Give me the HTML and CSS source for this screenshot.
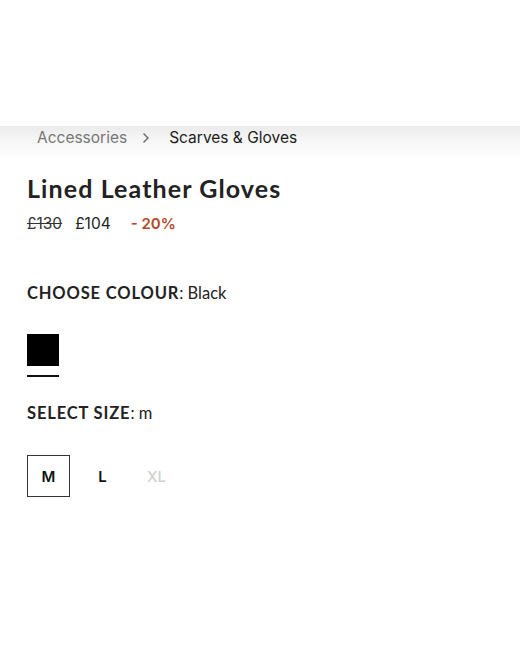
FILE: index.html
```html
<!DOCTYPE html>
<html lang="en">
<head>
<meta charset="utf-8">
<title>Lined Leather Gloves</title>
<link rel="stylesheet" href="styles.css">
</head>
<body>
<header class="topbar"></header>
<main class="product">
  <nav class="crumbs">
    <span class="crumb-link">Accessories</span>
    <svg class="chev" width="8" height="12" viewBox="0 0 8 12"><path d="M1.5 1.5 L6 6 L1.5 10.5" fill="none" stroke="#666" stroke-width="1.4"/></svg>
    <span class="crumb-current">Scarves &amp; Gloves</span>
  </nav>
  <div class="info">
    <h1 class="title">Lined Leather Gloves</h1>
    <div class="prices">
      <span class="old">£130</span>
      <span class="now">£104</span>
      <span class="off">- 20%</span>
    </div>
    <div class="label"><b>CHOOSE COLOUR</b>: Black</div>
    <div class="swatches">
      <div class="swatch selected"><span class="chip"></span></div>
    </div>
    <div class="label size-label"><b>SELECT SIZE</b>: m</div>
    <div class="sizes">
      <span class="size active">M</span>
      <span class="size">L</span>
      <span class="size disabled">XL</span>
    </div>
  </div>
</main>
</body>
</html>
```
FILE: styles.css
```css
* { box-sizing: border-box; }
body {
  margin: 0;
  background: #fff;
  font-family: "Lato", "Liberation Sans", sans-serif;
  color: #222;
}
.topbar { height: 126px; background: #fff; }
.product {
  background: linear-gradient(#ebebeb 0px, #f6f6f6 14px, #fff 34px);
}
.crumbs {
  display: flex;
  align-items: center;
  height: 22px;
  padding-left: 37px;
  font-family: "Inter", sans-serif;
  font-size: 15.5px;
}
.crumb-link { color: #767676; }
.chev { margin: 2px 19px 0 15px; }
.crumb-current { color: #1c1c1c; }
.info { padding: 0 27px; }
.title {
  margin: 25px 0 0;
  font-family: "Lato", sans-serif;
  font-weight: 700;
  font-size: 25px;
  line-height: 30px;
  letter-spacing: 1.1px;
  color: #222;
}
.prices {
  margin-top: 11px;
  display: flex;
  gap: 13px;
  font-family: "Inter", sans-serif;
  font-size: 15.5px;
  line-height: 20px;
}
.old { text-decoration: line-through; color: #333; }
.off { color: #b4492c; font-weight: 600; margin-left: 7px; font-size: 15px; }
.label {
  margin-top: 49px;
  font-family: "Lato", sans-serif;
  font-size: 16.5px;
  line-height: 20px;
  color: #222;
}
.label b { font-weight: 700; letter-spacing: 0.85px; }
.swatches { margin-top: 31px; display: flex; }
.swatch { width: 32px; padding-bottom: 9px; border-bottom: 2px solid #111; }
.chip { display: block; width: 32px; height: 32px; background: #000; }
.size-label { margin-top: 26px; }
.sizes { margin-top: 32px; display: flex; gap: 11px; }
.size {
  width: 43px;
  height: 42px;
  display: flex;
  align-items: center;
  justify-content: center;
  font-family: "Inter", sans-serif;
  font-weight: 600;
  font-size: 15px;
  color: #111;
  border: 1.5px solid transparent;
}
.size.active { border-color: #333; }
.size.disabled { color: #d0d0d0; font-weight: 500; }
```
